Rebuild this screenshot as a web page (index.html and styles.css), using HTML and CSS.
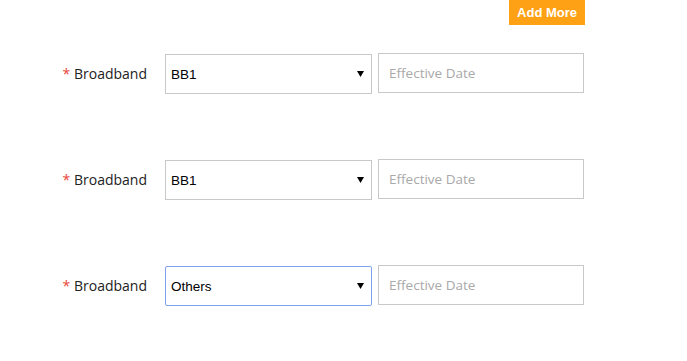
FILE: index.html
```html
<!DOCTYPE html>
<html lang="en">
<head>
    <meta charset="utf-8">
    <title>Broadband</title>
    <link rel="stylesheet" href="styles.css">
</head>
<body>
    <div class="wrap">
        <div class="top">
            <button class="add">Add More</button>
        </div>

        <div class="rows">
            <div class="row">
                <label class="lbl"><span class="req">*</span> Broadband</label>
                <div class="select">
                    <span>BB1</span>
                    <svg width="7" height="6" viewBox="0 0 7 6"><path d="M0 0H7L3.5 6Z" fill="#000"/></svg>
                </div>
                <input class="date" type="text" placeholder="Effective Date">
            </div>

            <div class="row">
                <label class="lbl"><span class="req">*</span> Broadband</label>
                <div class="select">
                    <span>BB1</span>
                    <svg width="7" height="6" viewBox="0 0 7 6"><path d="M0 0H7L3.5 6Z" fill="#000"/></svg>
                </div>
                <input class="date" type="text" placeholder="Effective Date">
            </div>

            <div class="row">
                <label class="lbl"><span class="req">*</span> Broadband</label>
                <div class="select aktiv">
                    <span>Others</span>
                    <svg width="7" height="6" viewBox="0 0 7 6"><path d="M0 0H7L3.5 6Z" fill="#000"/></svg>
                </div>
                <input class="date" type="text" placeholder="Effective Date">
            </div>
        </div>
    </div>
</body>
</html>
```

FILE: styles.css
```css
body {
    margin: 0;
    background-color: white;
    font-family: "Open Sans", "Noto Sans", sans-serif;
}

.wrap {
    width: 585px;
}

.top {
    display: flex;
    justify-content: flex-end;
}

.add {
    height: 25px;
    padding: 0 8px;
    border: none;
    background-color: #ffa114;
    color: white;
    font-family: "Liberation Sans", Arial, sans-serif;
    font-size: 13px;
    font-weight: bold;
}

.rows {
    display: flex;
    flex-direction: column;
    gap: 65px;
    margin-top: 28px;
}

.row {
    display: flex;
    align-items: flex-start;
    height: 41px;
}

.lbl {
    width: 147px;
    margin-right: 18px;
    line-height: 41px;
    text-align: right;
    font-size: 14px;
    color: #222;
}

.req {
    color: #e8463a;
}

.select {
    box-sizing: border-box;
    width: 207px;
    height: 40px;
    margin-top: 1px;
    padding: 0 7px 0 5px;
    display: flex;
    justify-content: space-between;
    align-items: center;
    border: 1px solid #c8c8c8;
    font-family: "Liberation Sans", Arial, sans-serif;
    font-size: 13.5px;
    color: #000;
}

.aktiv {
    border-color: #7ea3ec;
    border-radius: 2px;
}

.date {
    box-sizing: border-box;
    width: 206px;
    height: 40px;
    margin-left: 6px;
    padding: 0 10px;
    border: 1px solid #c8c8c8;
    font-family: "Open Sans", "Noto Sans", sans-serif;
    font-size: 13.5px;
    outline: none;
}

.date::placeholder {
    color: #a9a9a9;
}
```
